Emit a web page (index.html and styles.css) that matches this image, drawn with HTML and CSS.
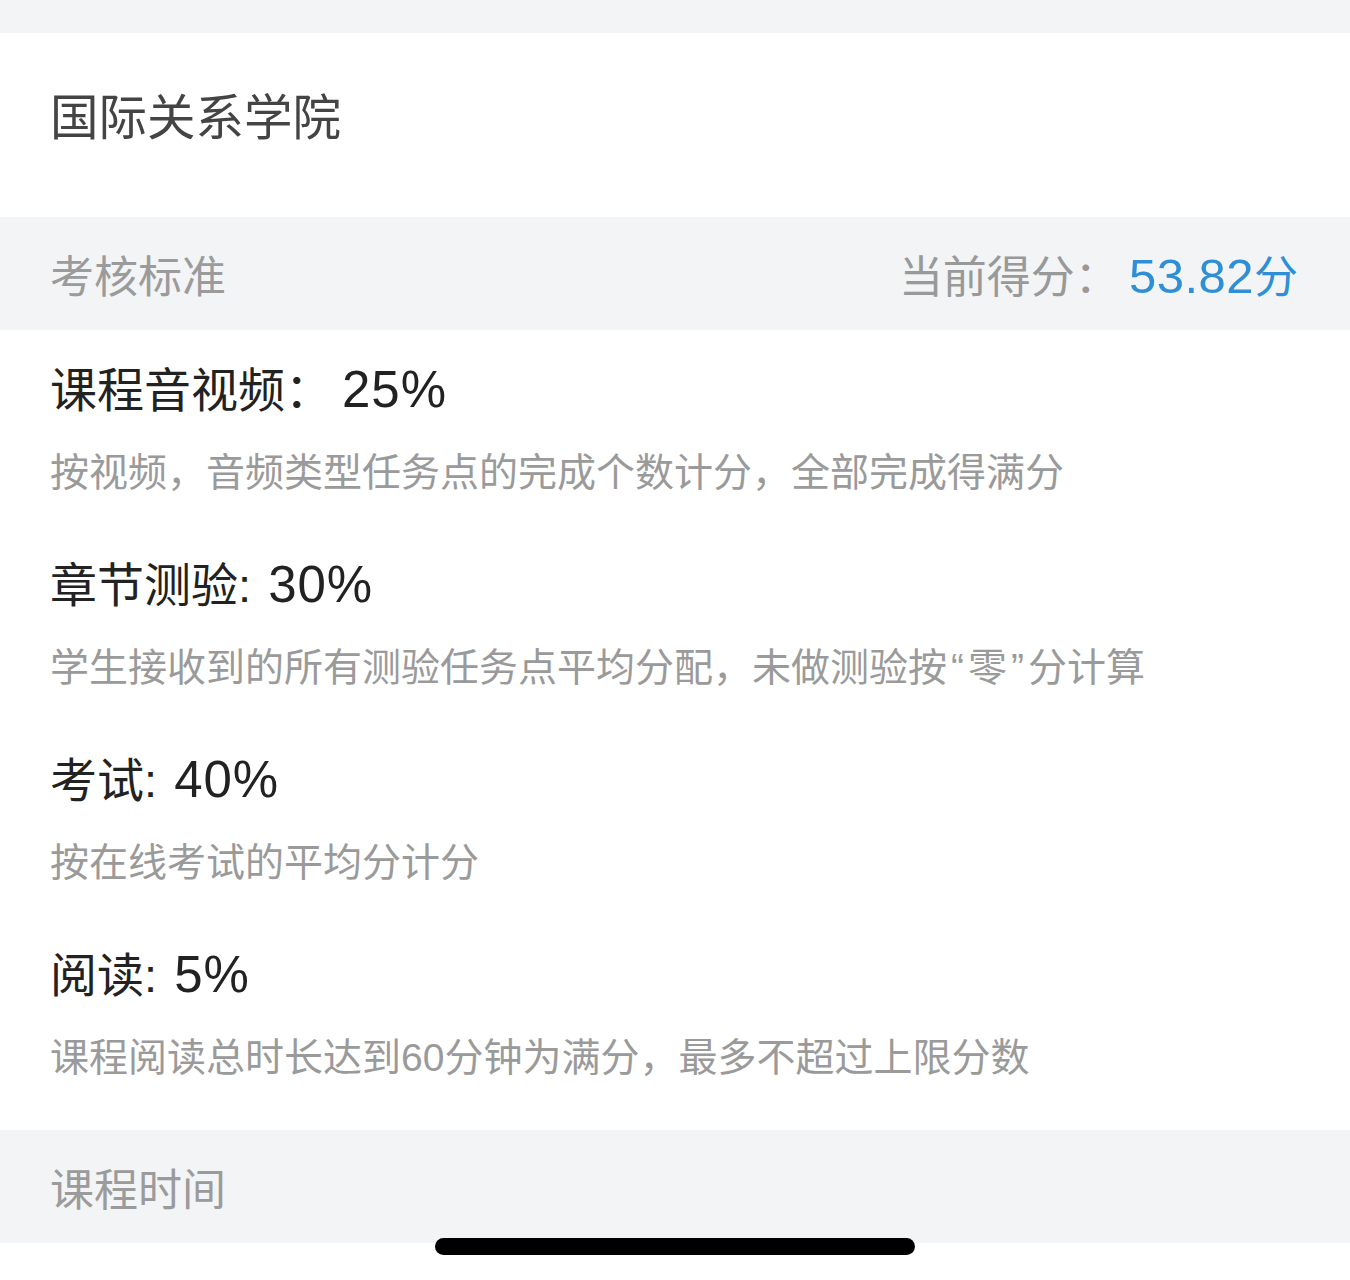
FILE: index.html
```html
<!DOCTYPE html>
<html lang="zh-CN">
<head>
<meta charset="utf-8">
<title>考核标准</title>
<link rel="stylesheet" href="styles.css">
</head>
<body>
<div class="page">
  <div class="topband"></div>
  <div class="school">国际关系学院</div>
  <div class="band">
    <span class="band-title">考核标准</span>
    <span class="score">当前得分：<span class="score-val"><span class="num">53.82</span>分</span></span>
  </div>
  <div class="list">
    <div class="item">
      <div class="item-title">课程音视频：<span class="num wide">25%</span></div>
      <div class="item-desc">按视频，音频类型任务点的完成个数计分，全部完成得满分</div>
    </div>
    <div class="item">
      <div class="item-title">章节测验: <span class="num">30%</span></div>
      <div class="item-desc">学生接收到的所有测验任务点平均分配，未做测验按<span class="quote">“</span>零<span class="quote">”</span>分计算</div>
    </div>
    <div class="item">
      <div class="item-title">考试: <span class="num">40%</span></div>
      <div class="item-desc">按在线考试的平均分计分</div>
    </div>
    <div class="item">
      <div class="item-title">阅读: <span class="num">5%</span></div>
      <div class="item-desc">课程阅读总时长达到60分钟为满分，最多不超过上限分数</div>
    </div>
  </div>
  <div class="band">
    <span class="band-title">课程时间</span>
  </div>
  <div class="bottom">
    <div class="home-indicator"></div>
  </div>
</div>
</body>
</html>
```

FILE: styles.css
```css
html, body {
  margin: 0;
  padding: 0;
  background: #ffffff;
}
body {
  font-family: "Liberation Sans", "Noto Sans CJK SC", sans-serif;
}
.page {
  width: 1350px;
  height: 1280px;
  overflow: hidden;
  background: #ffffff;
}
.topband {
  height: 33px;
  background: #f2f4f6;
}
.school {
  padding: 55px 50px 69px;
  font-size: 48.5px;
  line-height: 60px;
  height: 60px;
  color: #444444;
}
.band {
  height: 113px;
  background: #f2f4f6;
  display: flex;
  align-items: center;
  justify-content: space-between;
  padding: 0 52px 0 50px;
}
.band-title {
  font-size: 44px;
  color: #9b9b9b;
}
.score {
  font-size: 44px;
  color: #999999;
}
.score-val {
  color: #2f8fd6;
  margin-left: 10px;
}
.score-val .num {
  font-size: 49px;
  letter-spacing: 0.5px;
}
.list {
  padding: 30px 52px 44px 50px;
}
.item + .item {
  margin-top: 54px;
}
.item-title {
  font-size: 47px;
  line-height: 60px;
  height: 60px;
  color: #222222;
}
.item-title .num {
  font-size: 51px;
  letter-spacing: 1px;
  margin-left: 4px;
}
.item-title .num.wide {
  margin-left: 10px;
}
.item-desc {
  margin-top: 25px;
  font-size: 39px;
  line-height: 56px;
  height: 56px;
  color: #9a9a9a;
}
.quote {
  padding: 0 4px;
}
.bottom {
  position: relative;
  height: 37px;
  background: #ffffff;
}
.home-indicator {
  position: absolute;
  left: 435px;
  top: -5px;
  width: 480px;
  height: 17px;
  border-radius: 9px;
  background: #000000;
}
```
